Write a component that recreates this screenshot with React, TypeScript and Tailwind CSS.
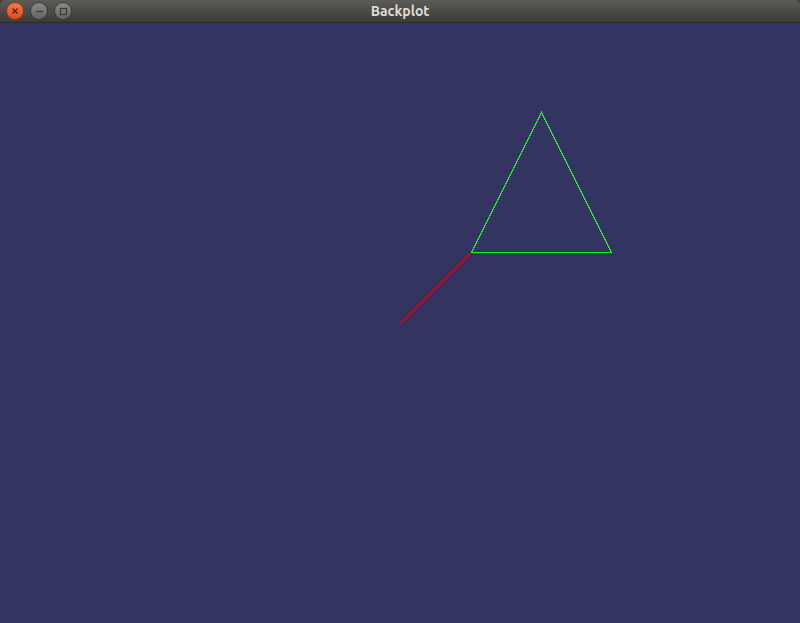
import React from 'react';

const TitleBar = () => (
  <div className="h-[23px] flex items-center relative rounded-t-[5px] bg-gradient-to-b from-[#5c5b56] to-[#3c3b37] border-b border-[#2b2a27]">
    <div className="flex items-center gap-[6px] pl-[6px]">
      <div className="w-[18px] h-[18px] rounded-full bg-gradient-to-b from-[#f47a4f] to-[#df4a17] border border-[#8a3a1c] flex items-center justify-center">
        <svg width="8" height="8" viewBox="0 0 8 8">
          <path d="M1.5 1.5 L6.5 6.5 M6.5 1.5 L1.5 6.5" stroke="#4a1a0a" strokeWidth="1.3" />
        </svg>
      </div>
      <div className="w-[18px] h-[18px] rounded-full bg-gradient-to-b from-[#8a8984] to-[#65645f] border border-[#3a3935] flex items-center justify-center">
        <svg width="9" height="9" viewBox="0 0 9 9">
          <path d="M1 4.5 H8" stroke="#3c3b37" strokeWidth="1.3" />
        </svg>
      </div>
      <div className="w-[18px] h-[18px] rounded-full bg-gradient-to-b from-[#8a8984] to-[#65645f] border border-[#3a3935] flex items-center justify-center">
        <svg width="9" height="9" viewBox="0 0 9 9">
          <rect x="1.5" y="1.5" width="6" height="6" fill="none" stroke="#3c3b37" strokeWidth="1.2" />
        </svg>
      </div>
    </div>
    <div className="absolute inset-0 flex items-center justify-center pointer-events-none">
      <span className="text-[#dfdbd2] text-[14px] font-bold" style={{ fontFamily: 'Ubuntu, "DejaVu Sans", sans-serif' }}>
        Backplot
      </span>
    </div>
  </div>
);

const App = () => {
  return (
    <div className="w-[800px] h-[623px] bg-[#3c3b37] flex flex-col overflow-hidden">
      <TitleBar />
      <div className="flex-1 bg-[#333462]">
        <svg width="800" height="600" viewBox="0 23 800 600" className="block">
          <path d="M400.5 323.5 L470.5 253.5" stroke="#ee0000" strokeWidth="1.6" fill="none" />
          <polygon points="541.5,112.5 611.5,252.5 471.5,252.5" fill="none" stroke="#00ff00" strokeWidth="1" shapeRendering="crispEdges" />
        </svg>
      </div>
    </div>
  );
};

export default App;
